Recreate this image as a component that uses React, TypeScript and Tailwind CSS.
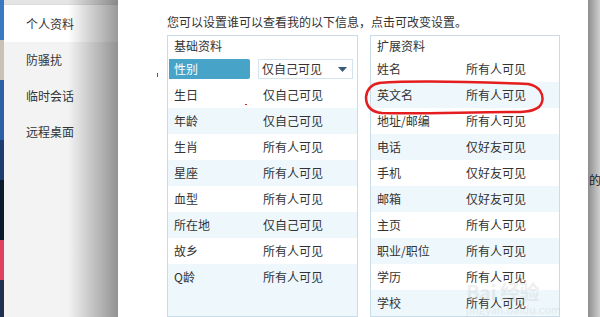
import React from "react";

const font = { fontFamily: '"Noto Sans CJK SC", "Noto Sans", sans-serif' };

type Row = { k: string; v: string; blue?: boolean };

const leftRows: Row[] = [
  { k: "生日", v: "仅自己可见" },
  { k: "年龄", v: "仅自己可见", blue: true },
  { k: "生肖", v: "所有人可见" },
  { k: "星座", v: "所有人可见", blue: true },
  { k: "血型", v: "所有人可见" },
  { k: "所在地", v: "仅自己可见", blue: true },
  { k: "故乡", v: "所有人可见" },
];

const rightRows: Row[] = [
  { k: "姓名", v: "所有人可见" },
  { k: "英文名", v: "所有人可见", blue: true },
  { k: "地址/邮编", v: "所有人可见" },
  { k: "电话", v: "仅好友可见", blue: true },
  { k: "手机", v: "仅好友可见" },
  { k: "邮箱", v: "仅好友可见", blue: true },
  { k: "主页", v: "所有人可见" },
  { k: "职业/职位", v: "所有人可见", blue: true },
  { k: "学历", v: "所有人可见" },
  { k: "学校", v: "所有人可见", blue: true },
];

function DataRow({ r }: { r: Row }) {
  return (
    <div className={`flex items-center h-[26px] ${r.blue ? "bg-[#edf7fc]" : "bg-white"}`}>
      <span className="w-[95px] pl-[6px]">{r.k}</span>
      <span>{r.v}</span>
    </div>
  );
}

export default function App() {
  return (
    <div
      className="relative flex w-[600px] h-[317px] overflow-hidden bg-white text-[12px] leading-none text-[#333]"
      style={font}
    >
      {/* desktop strip */}
      <div className="flex flex-col w-[4px] h-full">
        <div className="h-[40px] bg-[#3a78c0]" />
        <div className="h-[40px] bg-[#c9c2b4]" />
        <div className="h-[60px] bg-[#2b5fa8]" />
        <div className="h-[40px] bg-[#1c3d6e]" />
        <div className="h-[60px] bg-[#0c1a2e]" />
        <div className="h-[40px] bg-[#e0405e]" />
        <div className="flex-1 bg-[#203050]" />
      </div>

      {/* sidebar */}
      <div className="relative w-[114px] h-full bg-[#f3f3f3]">
        <div className="h-[5px] bg-[#e4e4e4] border-b border-[#dcdcdc]" />
        <div className="flex items-center h-[37px] bg-white pl-[22px]">个人资料</div>
        <div className="flex items-center h-[36px] pl-[22px]">防骚扰</div>
        <div className="flex items-center h-[36px] pl-[22px]">临时会话</div>
        <div className="flex items-center h-[36px] pl-[22px]">远程桌面</div>
        <div className="absolute top-0 right-0 h-full w-[50px] bg-gradient-to-r from-[rgba(0,0,0,0)] to-[rgba(0,0,0,0.4)]" />
      </div>

      {/* main */}
      <div className="relative flex-1 h-full pl-[49px]">
        <div className="pt-[16px] h-[35px]">您可以设置谁可以查看我的以下信息，点击可改变设置。</div>
        <div className="flex gap-[12px]">
          {/* left table */}
          <div className="w-[191px] h-[282px] border border-[#c9dce8] bg-[#edf7fc] flex flex-col">
            <div className="flex items-center h-[20px] bg-white pl-[6px]">基础资料</div>
            <div className="flex items-center h-[26px] bg-white">
              <div className="ml-[1px] w-[81px] h-[20px] bg-[#47a3c8] text-white flex items-center pl-[5px] rounded-r-[2px]">
                性别
              </div>
              <div className="ml-[8px] w-[95px] h-[20px] border border-[#d3e4ef] bg-white flex items-center justify-between pl-[3px] pr-[5px]">
                <span>仅自己可见</span>
                <svg width="9" height="5" viewBox="0 0 9 5">
                  <path d="M0 0 L9 0 L4.5 5 Z" fill="#3b5a78" />
                </svg>
              </div>
            </div>
            {leftRows.map((r) => (
              <DataRow key={r.k} r={r} />
            ))}
            <div className="flex items-center h-[26px]">
              <span className="w-[95px] pl-[6px]">Q龄</span>
              <span>所有人可见</span>
            </div>
          </div>

          {/* right table */}
          <div className="relative w-[190px] h-[282px] border border-[#c9dce8] bg-white flex flex-col">
            <div className="flex items-center h-[20px] pl-[6px]">扩展资料</div>
            {rightRows.map((r) => (
              <DataRow key={r.k} r={r} />
            ))}
            <div className="absolute left-[95px] bottom-[14px] text-[20px] font-bold text-[rgba(200,200,200,0.3)] tracking-tight">
              Bai 经验
            </div>
            <div className="absolute left-[95px] bottom-[1px] text-[11px] text-[rgba(200,200,200,0.35)]">
              jingyan.baidu.com
            </div>
          </div>
        </div>
        {/* stray marks */}
        <div className="absolute left-[39px] top-[73px] w-[1px] h-[4px] bg-[#e02020]" />
        <div className="absolute left-[127px] top-[104px] w-[2px] h-[1px] bg-[#e02020]" />
      </div>

      {/* right shaded edge */}
      <div className="relative w-[12px] h-full bg-gradient-to-r from-[#8e8e8e] to-[#cfcfcf] overflow-hidden">
        <div className="absolute left-[1px] top-[174px] text-[12px] text-[#222]">的</div>
      </div>

      {/* red ellipse annotation */}
      <svg className="absolute left-0 top-0 pointer-events-none" width="600" height="317">
        <path
          d="M378 83 C420 80, 480 82, 528 84 C540 86, 544 95, 542 102 C540 110, 530 112, 515 112 C470 112, 420 114, 382 113 C370 112, 366 105, 366 97 C367 88, 372 84, 380 83"
          fill="none"
          stroke="#e41e1e"
          strokeWidth="2.5"
        />
      </svg>
    </div>
  );
}
